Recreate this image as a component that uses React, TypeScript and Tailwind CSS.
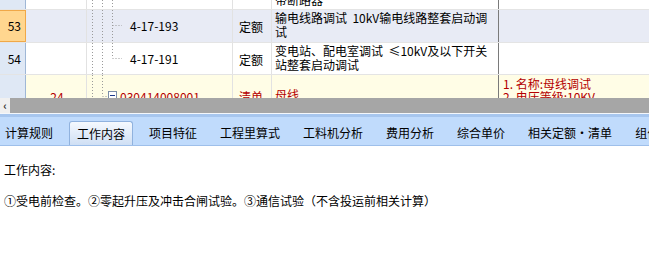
const font = { fontFamily: "'Noto Sans CJK SC', 'Liberation Sans', sans-serif" };

function TreeLines({ branch, last, box }: { branch?: number; last?: boolean; box?: boolean }) {
  // dotted connectors of the tree column
  return (
    <svg className="absolute left-0 top-0" width="40" height="40" viewBox="0 0 40 40">
      <g stroke="#9a9a9a" strokeWidth="1" strokeDasharray="1 2" fill="none">
        <line x1="5.5" y1="0" x2="5.5" y2="40" />
        <line x1="15.5" y1="0" x2="15.5" y2={box ? 21 : 40} />
        {box && <line x1="15.5" y1="21.5" x2="21" y2="21.5" />}
        {branch !== undefined && <line x1="25.5" y1="0" x2="25.5" y2={last ? branch : 40} />}
        {branch !== undefined && <line x1="25.5" y1={branch + 0.5} x2="35" y2={branch + 0.5} />}
        {branch === undefined && !box && <line x1="25.5" y1="0" x2="25.5" y2="40" />}
      </g>
      {box && (
        <g>
          <rect x="21.5" y="16.5" width="8" height="8" fill="#fff" stroke="#7c8ea8" />
          <line x1="23" y1="20.5" x2="28" y2="20.5" stroke="#1c3a8a" />
        </g>
      )}
    </svg>
  );
}

function Row({
  no,
  h,
  bg,
  active,
  c1,
  code,
  tree,
  kind,
  name,
  feature,
  red,
  top = 0,
}: {
  no: string;
  h: string;
  bg: string;
  active?: boolean;
  c1?: string;
  code?: string;
  tree: React.ReactNode;
  kind?: string;
  name?: React.ReactNode;
  feature?: React.ReactNode;
  red?: boolean;
  top?: number;
}) {
  const txt = red ? "text-[#b40000]" : "text-black";
  return (
    <div className={`flex ${h} ${bg} shrink-0 overflow-hidden border-b border-[#e4e4e4]`}>
      <div
        className={`w-[26px] shrink-0 flex items-center justify-end pr-[4px] text-[12px] border-r ${
          active ? "bg-[#ffd68f] border-[#f0a848] border-y" : "bg-[#dfe8f5] border-[#9fb7d6]"
        }`}
      >
        <span className={top ? "mt-[28px]" : ""}>{no}</span>
      </div>
      <div className={`w-[61px] shrink-0 border-r border-[#e2e2e2] flex justify-center text-[12px] ${txt}`}>
        {c1 && <span className="pt-[13px] pl-[2px]">{c1}</span>}
      </div>
      <div className={`relative w-[146px] shrink-0 border-r border-[#e2e2e2] text-[12px] ${txt}`}>
        {tree}
        {code && <span className={`absolute ${red ? "left-[33px] top-[13px]" : "left-[43px] top-[7px]"}`}>{code}</span>}
      </div>
      <div className={`w-[39px] shrink-0 border-r border-[#e2e2e2] text-[12px] pl-[6px] ${txt}`}>
        {kind && <div className={red ? "pt-[13px]" : "pt-[8px]"}>{kind}</div>}
      </div>
      <div className={`w-[227px] shrink-0 border-r border-[#7a7a7a] text-[12px] leading-[14px] pl-[3px] ${txt}`}>{name}</div>
      <div className={`flex-1 text-[12px] leading-[13px] pl-[4px] ${txt}`}>{feature}</div>
    </div>
  );
}

const tabs = ["计算规则", "工作内容", "项目特征", "工程里算式", "工料机分析", "费用分析", "综合单价", "相关定额・清单", "组价方案"];

export default function App() {
  return (
    <div className="w-[649px] h-[254px] overflow-hidden bg-white flex flex-col text-black" style={font}>
      <div className="h-[98px] flex flex-col overflow-hidden shrink-0">
        <Row
          no=""
          h="h-[10px]"
          bg="bg-white"
          tree={<TreeLines />}
          name={<div className="-mt-[7px]">带断路器</div>}
        />
        <Row
          no="53"
          h="h-[33px]"
          bg="bg-[#e8ebf5]"
          active
          code="4-17-193"
          tree={<TreeLines branch={15} />}
          kind="定额"
          name={
            <div className="pt-[1px]">
              输电线路调试&nbsp; 10kV输电线路整套启动调
              <br />试
            </div>
          }
        />
        <Row
          no="54"
          h="h-[32px]"
          bg="bg-white"
          code="4-17-191"
          tree={<TreeLines branch={15} last />}
          kind="定额"
          name={
            <div className="pt-[1px]">
              变电站、配电室调试&nbsp; ≤10kV及以下开关
              <br />站整套启动调试
            </div>
          }
        />
        <Row
          no="55"
          h="h-[36px]"
          bg="bg-[#fffde6]"
          top={1}
          c1="24"
          code="030414008001"
          red
          tree={<TreeLines box />}
          kind="清单"
          name={<div className="pt-[13px]">母线</div>}
          feature={
            <div className="pt-[2px]">
              1. 名称:母线调试
              <br />2. 电压等级:10KV
            </div>
          }
        />
      </div>

      <div className="h-[15px] flex shrink-0 bg-[#a6a6a6]">
        <div className="w-[10px] bg-[#f0f0f0] flex items-center justify-center text-[11px] font-bold text-[#333] leading-none">
          ‹
        </div>
      </div>
      <div className="h-[1px] bg-[#f4f7fb] shrink-0" />
      <div className="h-[3px] bg-[#a7c6ee] shrink-0" />
      <div className="h-[29px] bg-[#c0dbfc] border-b border-[#9ebfea] flex items-end shrink-0 overflow-hidden">
        <div className="flex gap-[9px] -ml-[2px] whitespace-nowrap">
          {tabs.map((t, i) =>
            i === 1 ? (
              <div
                key={t}
                className="px-[7px] h-[24px] flex items-center text-[12px] rounded-t-[3px] border border-b-0 border-[#90b2de] bg-gradient-to-b from-[#f5f9fe] to-[#cfdff4]"
              >
                {t}
              </div>
            ) : (
              <div key={t} className="px-[7px] h-[24px] flex items-center text-[12px]">
                {t}
              </div>
            )
          )}
        </div>
      </div>
      <div className="flex-1 px-[4px] pt-[17px] text-[12px] leading-[14px] bg-white">
        <div>工作内容:</div>
        <div className="mt-[17px]">①受电前检查。②零起升压及冲击合闸试验。③通信试验（不含投运前相关计算）</div>
      </div>
    </div>
  );
}
